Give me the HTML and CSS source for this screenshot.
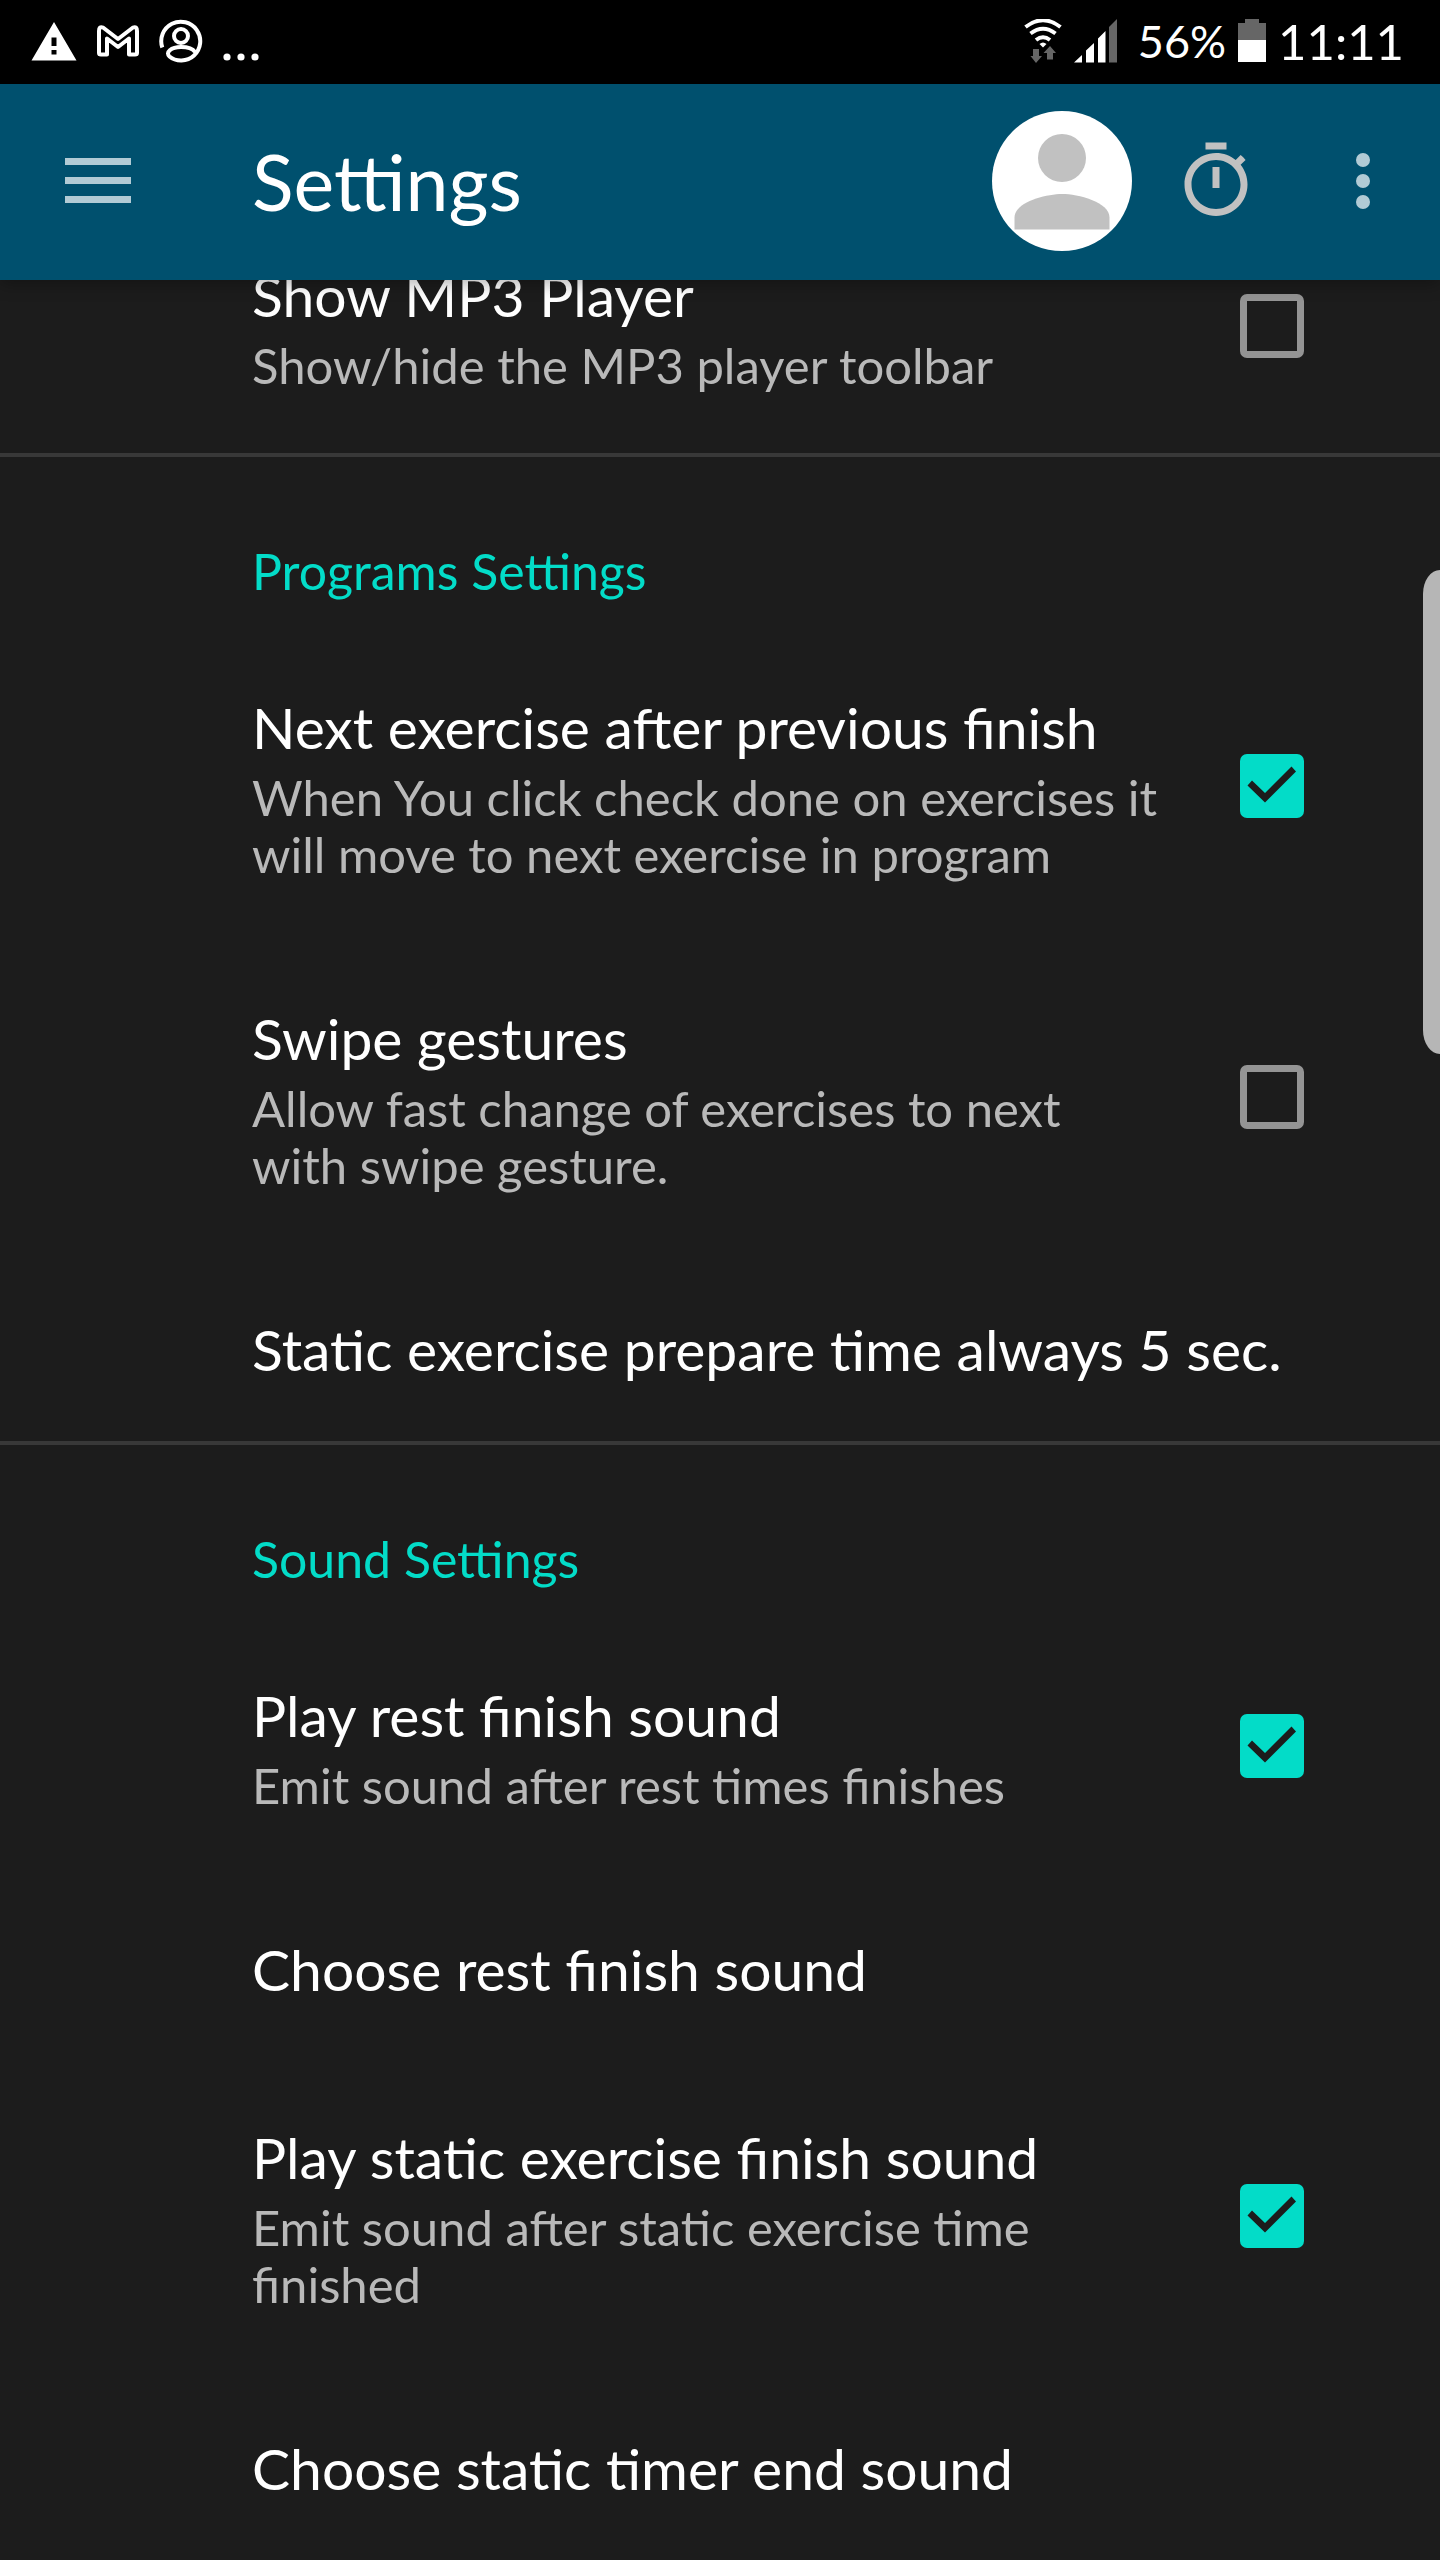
FILE: index.html
```html
<!DOCTYPE html>
<html lang="en">
<head>
<meta charset="utf-8">
<meta name="viewport" content="width=device-width, initial-scale=1">
<title>Settings</title>
<link rel="stylesheet" href="styles.css">
</head>
<body>
<div class="status-bar">
  <div class="status-notes">
    <svg width="46" height="40" viewBox="0 0 46 40" aria-hidden="true"><path fill="#fff" fill-rule="evenodd" d="M23 1 45.500 39.500H.5zM20.500 16.500v8.500h5v-8.500zM20.500 29v4.500h5V29z"/></svg>
    <svg width="42" height="32" viewBox="0 0 42 32" aria-hidden="true"><path fill="none" stroke="#fff" stroke-width="4" stroke-linejoin="round" d="M2 28V6Q2 1 6 2.500L21 14 36 2.500Q40 1 40 6V28Q40 29.500 38 29.500H32V13.500L21 22 10 13.500V29.500H4Q2 29.500 2 28z"/></svg>
    <svg width="44" height="44" viewBox="0 0 44 44" aria-hidden="true"><g fill="none" stroke="#fff" stroke-width="4"><path d="M3.300 28.500A19.500 19.500 0 1 1 35 36.500C28 43 17 43 10.500 37.500 6 33.500 12 28 22 28 29 28 34 30 36 33"/><circle cx="22" cy="17" r="7"/></g></svg>
    <svg width="36" height="10" viewBox="0 0 36 10" class="more-notes" aria-hidden="true"><g fill="#fff"><circle cx="4" cy="4" r="3.600"/><circle cx="18" cy="4" r="3.600"/><circle cx="32" cy="4" r="3.600"/></g></svg>
  </div>
  <div class="status-system">
    <svg width="38" height="44" viewBox="0 0 38 44" aria-hidden="true"><g fill="none" stroke="#fff" stroke-width="4"><path d="M1.500 8Q19-5.500 36.500 8"/><path d="M6.500 14.500Q19 5 31.500 14.500"/><path d="M12 21Q19 15.500 26 21"/></g><path fill="#fff" d="M15.500 25Q19 22 22.500 25L19 28.500z"/><path fill="#666" d="M9 30h6v7h3l-6 7-5.500-7H9zM26 27l6 7h-3v6.500h-6V34h-3.500z"/></svg>
    <svg width="44" height="44" viewBox="0 0 44 44" aria-hidden="true"><g fill="#fff"><path d="M0 43.500 8 36v7.500zM12 31.500 20 24v19.500h-8zM24 19.500 31.500 12v31.500H24z"/></g><path fill="#666" d="M35 8 43 0v43.500h-8z"/></svg>
    <span class="battery-level">56%</span>
    <svg width="28" height="44" viewBox="0 0 28 44" aria-hidden="true"><path fill="#666" d="M7 0h14v4h7v17H0V4h7z"/><path fill="#fff" d="M0 21h28v22H0z"/></svg>
    <time class="clock">11:11</time>
  </div>
</div>

<header class="toolbar">
  <button class="icon-button menu-button" type="button" aria-label="Open menu">
    <svg width="66" height="46" viewBox="0 0 66 46"><path fill="#b2cbd5" d="M0 0h66v7H0zM0 19h66v7H0zM0 38h66v7H0z"/></svg>
  </button>
  <h1 class="toolbar-title">Settings</h1>
  <button class="icon-button avatar" type="button" aria-label="Account">
    <svg width="140" height="140" viewBox="0 0 140 140"><circle cx="70" cy="70" r="70" fill="#fff"/><g fill="#c1c1c1"><circle cx="70" cy="47" r="24"/><path d="M22.500 118.500v-12C22.500 91 54 83 70 83s47.500 8 47.500 23.500v12z"/></g></svg>
  </button>
  <button class="icon-button timer" type="button" aria-label="Timer">
    <svg width="84" height="84" viewBox="0 0 24 24"><path fill="#c1c1c1" d="M15 1H9v2h6V1zm-4 13h2V8h-2v6zm8.030-6.610 1.420-1.420c-.43-.51-.9-.99-1.410-1.410l-1.420 1.420C16.070 4.740 14.120 4 12 4c-4.970 0-9 4.030-9 9s4.020 9 9 9 9-4.030 9-9c0-2.120-.74-4.070-1.970-5.610zM12 20c-3.870 0-7-3.130-7-7s3.130-7 7-7 7 3.130 7 7-3.130 7-7 7z"/></svg>
  </button>
  <button class="icon-button overflow" type="button" aria-label="More options">
    <svg width="14" height="56" viewBox="0 0 14 56"><g fill="#b2cbd5"><circle cx="7" cy="7" r="7"/><circle cx="7" cy="28" r="7"/><circle cx="7" cy="49" r="7"/></g></svg>
  </button>
</header>

<main class="content">
  <div class="settings">
    <section>
      <label class="row">
        <span class="row-text"><span class="row-title">Show MP3 Player</span><span class="row-summary">Show/hide the MP3 player toolbar</span></span>
        <input class="check" type="checkbox">
      </label>
    </section>
    <section>
      <h2 class="category">Programs Settings</h2>
      <label class="row">
        <span class="row-text"><span class="row-title">Next exercise after previous finish</span><span class="row-summary">When You click check done on exercises it will move to next exercise in program</span></span>
        <input class="check" type="checkbox" checked>
      </label>
      <label class="row">
        <span class="row-text"><span class="row-title">Swipe gestures</span><span class="row-summary">Allow fast change of exercises to next with swipe gesture.</span></span>
        <input class="check" type="checkbox">
      </label>
      <button class="row" type="button"><span class="row-title">Static exercise prepare time always 5 sec.</span></button>
    </section>
    <section>
      <h2 class="category">Sound Settings</h2>
      <label class="row">
        <span class="row-text"><span class="row-title">Play rest finish sound</span><span class="row-summary">Emit sound after rest times finishes</span></span>
        <input class="check" type="checkbox" checked>
      </label>
      <button class="row" type="button"><span class="row-title">Choose rest finish sound</span></button>
      <label class="row">
        <span class="row-text"><span class="row-title">Play static exercise finish sound</span><span class="row-summary">Emit sound after static exercise time finished</span></span>
        <input class="check" type="checkbox" checked>
      </label>
      <button class="row" type="button"><span class="row-title">Choose static timer end sound</span></button>
    </section>
  </div>
  <div class="scroll-thumb"></div>
</main>
</body>
</html>
```
FILE: styles.css
```css
* {
  box-sizing: border-box;
}

body {
  margin: 0;
  min-height: 100vh;
  background: #1c1c1c;
  color: #fff;
  font-family: Lato, sans-serif;
}

svg {
  display: block;
  flex: none;
}

.status-bar {
  display: flex;
  justify-content: space-between;
  align-items: center;
  height: 84px;
  padding: 0 36px 2px 31px;
  background: #000;
}

.status-notes,
.status-system {
  display: flex;
  align-items: center;
}

.status-notes {
  gap: 20px;
}

.more-notes {
  align-self: flex-end;
}

.status-system {
  gap: 12px;
  line-height: 56px;
}

.battery-level {
  margin-left: 8px;
  font-size: 45px;
}

.clock {
  font-size: 49px;
}

/* App bar */

.toolbar {
  position: relative;
  z-index: 1;
  display: flex;
  align-items: center;
  height: 196px;
  padding: 0 70px 2px 65px;
  background: #00506e;
  box-shadow: 0 4px 16px rgba(0, 0, 0, 0.3);
}

.icon-button {
  flex: none;
  padding: 0;
  border: 0;
  background: none;
  cursor: pointer;
}

.toolbar-title {
  flex: 1;
  margin: 0 0 0 121px;
  font-size: 77px;
  font-weight: 400;
  line-height: 84px;
}

.timer {
  margin: 0 98px 0 42px;
}

/* Preference list, scrolled so that its first row is partly under the app bar */

.content {
  position: relative;
  overflow: hidden;
}

.settings {
  margin-top: -81px;
}

.category {
  margin: 0;
  padding: 86px 136px 31px 252px;
  border-top: 4px solid #383838;
  color: #03dcc8;
  font-size: 50px;
  font-weight: 400;
  line-height: 57px;
}

.row {
  display: flex;
  align-items: center;
  gap: 80px;
  width: 100%;
  padding: 62px 136px 58px 252px;
  border: 0;
  background: none;
  color: inherit;
  font: inherit;
  text-align: left;
  cursor: pointer;
}

.row-text {
  flex: 1;
  display: flex;
  flex-direction: column;
  gap: 8px;
  padding-bottom: 1px;
}

.row-title {
  font-size: 57px;
  line-height: 68px;
}

.row-summary {
  color: #b9b9b9;
  font-size: 49px;
  line-height: 57px;
}

.check {
  appearance: none;
  flex: none;
  width: 64px;
  height: 64px;
  margin: 0 0 5px;
  border: 7px solid #949494;
  border-radius: 7px;
}

.check:checked {
  border: 0;
  background: #03dcc8 url("data:image/svg+xml,%3Csvg xmlns='http://www.w3.org/2000/svg' viewBox='0 0 64 64'%3E%3Cpath fill='%231c1c1c' d='M25 48.500 7.500 31.500 12 26.500 25 39 51.500 12.500 56 17.500z'/%3E%3C/svg%3E") center / 64px 64px no-repeat;
}

.scroll-thumb {
  position: absolute;
  top: 290px;
  right: 0;
  width: 17px;
  height: 484px;
  border-radius: 17px 0 0 17px / 24px 0 0 24px;
  background: #b6b6b6;
}
```
